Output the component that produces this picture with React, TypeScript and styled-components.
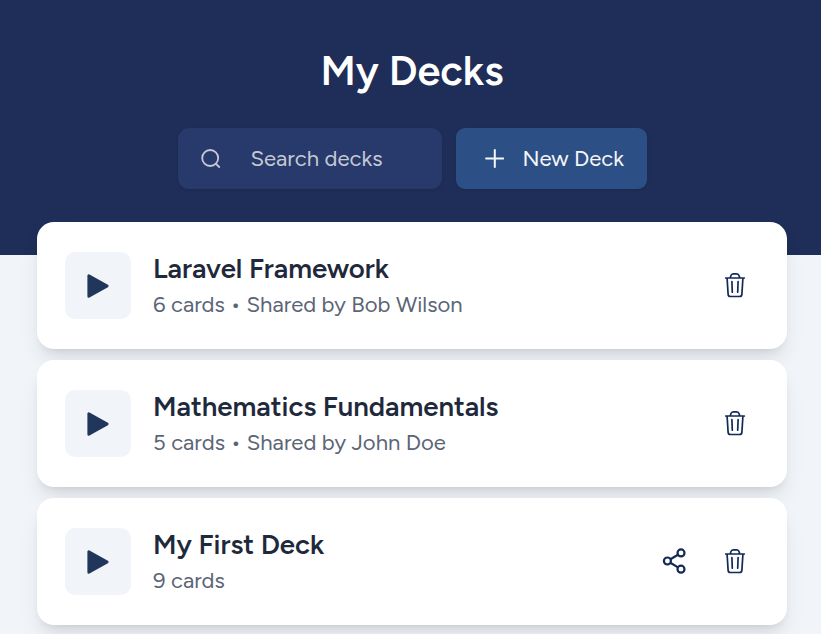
import React from "react";
import styled, { createGlobalStyle } from "styled-components";

const GlobalStyle = createGlobalStyle`
  * { box-sizing: border-box; }
  body {
    margin: 0;
    background: #f1f5fa;
    font-family: "Figtree", "Inter", "Lato", sans-serif;
    overflow: hidden;
  }
  button { font: inherit; border: 0; padding: 0; background: none; color: inherit; }
`;

const Page = styled.div`
  height: 634px;
  overflow: hidden;
`;

const Header = styled.header`
  display: flex;
  flex-direction: column;
  align-items: center;
  height: 255px;
  padding: 45px 0 0 3px;
  background: #1f2e58;
`;

const Heading = styled.h1`
  margin: 0;
  height: 52px;
  line-height: 52px;
  font-size: 41.4px;
  font-weight: 600;
  color: #fff;
  white-space: nowrap;
`;

const Toolbar = styled.div`
  display: flex;
  gap: 14px;
  margin-top: 31px;
`;

const SearchBox = styled.div`
  display: flex;
  align-items: center;
  width: 264px;
  height: 61px;
  padding-left: 23px;
  gap: 30px;
  border-radius: 11px;
  background: #28396c;
  color: #c5c9d3;
  box-shadow: 0 1px 3px rgba(0, 0, 0, 0.12);
`;

const NewDeckButton = styled.button`
  && {
    display: flex;
    align-items: center;
    width: 191px;
    height: 61px;
    padding-left: 29px;
    gap: 19px;
    border-radius: 9px;
    background: #2c5085;
    color: #f4f6fa;
    text-align: left;
    box-shadow: 0 1px 3px rgba(0, 0, 0, 0.12);
  }
`;

const Label = styled.span`
  font-size: 22.08px;
  line-height: 30px;
  white-space: nowrap;
`;

const DeckList = styled.main`
  display: flex;
  flex-direction: column;
  gap: 11px;
  margin: -33px 34px 0 37px;
`;

const Card = styled.article`
  position: relative;
  display: flex;
  align-items: center;
  flex: none;
  height: 127px;
  padding: 0 38px 0 28px;
  border-radius: 17px;
  background: #fff;
  box-shadow: 0 14px 21px -4px rgba(0, 0, 0, 0.1), 0 5px 8px -5px rgba(0, 0, 0, 0.13);
`;

const PlayTile = styled.button`
  && {
    display: grid;
    place-items: center;
    width: 66px;
    height: 67px;
    padding-top: 1px;
    border-radius: 10px;
    background: #f1f5fa;
  }
`;

const DeckText = styled.div`
  flex: 1;
  margin-left: 22px;
  padding-top: 1px;
`;

const DeckTitle = styled.h2`
  margin: 0;
  height: 37px;
  line-height: 36px;
  font-size: 27.6px;
  font-weight: 600;
  letter-spacing: -0.03px;
  color: #1e293b;
  white-space: nowrap;
`;

const DeckMeta = styled.p`
  margin: 0;
  height: 34px;
  line-height: 34px;
  font-size: 22.08px;
  color: #5b6576;
  white-space: nowrap;
`;

const Actions = styled.div`
  display: flex;
  align-items: center;
  gap: 33px;
  padding-bottom: 1px;
`;

const IconButton = styled.button`
  display: flex;
`;

const SearchIcon = () => (
  <svg width="20" height="20" viewBox="0 0 20 20" fill="none" stroke="currentColor" strokeWidth="1.8" strokeLinecap="round">
    <circle cx="9.2" cy="9" r="8" />
    <path d="m15 14.8 3.2 3.2" />
  </svg>
);

const PlusIcon = () => (
  <svg width="19" height="19" viewBox="0 0 19 19" stroke="currentColor" strokeWidth="2" strokeLinecap="round">
    <path d="M9.8 1v17M1.1 9.5h17.3" />
  </svg>
);

const PlayIcon = () => (
  <svg width="24" height="26" viewBox="0 0 24 26" fill="#20365a" stroke="#20365a" strokeWidth="2.8" strokeLinejoin="round">
    <path d="M2.8 2.6v20.8L21.2 13z" />
  </svg>
);

const TrashIcon = () => (
  <svg width="28" height="28" viewBox="0 0 28 28" fill="none" stroke="#132a56" strokeWidth="1.7" strokeLinecap="round" strokeLinejoin="round">
    <path d="M4.7 7h18.6M6.1 7.2l1 15.9c.1 1.6.9 2.4 2.4 2.4h9c1.5 0 2.3-.8 2.4-2.4l1-15.9M9.3 6.8l.5-1.9c.4-1.4 1.2-2.1 2.6-2.1h3.2c1.4 0 2.2.7 2.6 2.1l.5 1.9M10.9 10.5l.4 10.7M17.1 10.5l-.4 10.7" />
  </svg>
);

const ShareIcon = () => (
  <svg width="28" height="28" viewBox="0 0 28 28" fill="none" stroke="#132a56" strokeWidth="2.2">
    <circle cx="21" cy="5.9" r="3.5" />
    <circle cx="7.4" cy="14" r="3.5" />
    <circle cx="21" cy="22.2" r="3.5" />
    <path d="m10.4 12.2 7.6-4.5M10.4 15.8l7.6 4.6" />
  </svg>
);

interface Deck {
  title: string;
  meta: string;
  shareable?: boolean;
}

const decks: Deck[] = [
  { title: "Laravel Framework", meta: "6 cards • Shared by Bob Wilson" },
  { title: "Mathematics Fundamentals", meta: "5 cards • Shared by John Doe" },
  { title: "My First Deck", meta: "9 cards", shareable: true },
];

export default function App() {
  return (
    <Page>
      <GlobalStyle />
      <Header>
        <Heading>My Decks</Heading>
        <Toolbar>
          <SearchBox>
            <SearchIcon />
            <Label>Search decks</Label>
          </SearchBox>
          <NewDeckButton>
            <PlusIcon />
            <Label>New Deck</Label>
          </NewDeckButton>
        </Toolbar>
      </Header>
      <DeckList>
        {decks.map((deck) => (
          <Card key={deck.title}>
            <PlayTile aria-label={`Study ${deck.title}`}>
              <PlayIcon />
            </PlayTile>
            <DeckText>
              <DeckTitle>{deck.title}</DeckTitle>
              <DeckMeta>{deck.meta}</DeckMeta>
            </DeckText>
            <Actions>
              {deck.shareable && (
                <IconButton aria-label="Share deck">
                  <ShareIcon />
                </IconButton>
              )}
              <IconButton aria-label="Delete deck">
                <TrashIcon />
              </IconButton>
            </Actions>
          </Card>
        ))}
      </DeckList>
    </Page>
  );
}
